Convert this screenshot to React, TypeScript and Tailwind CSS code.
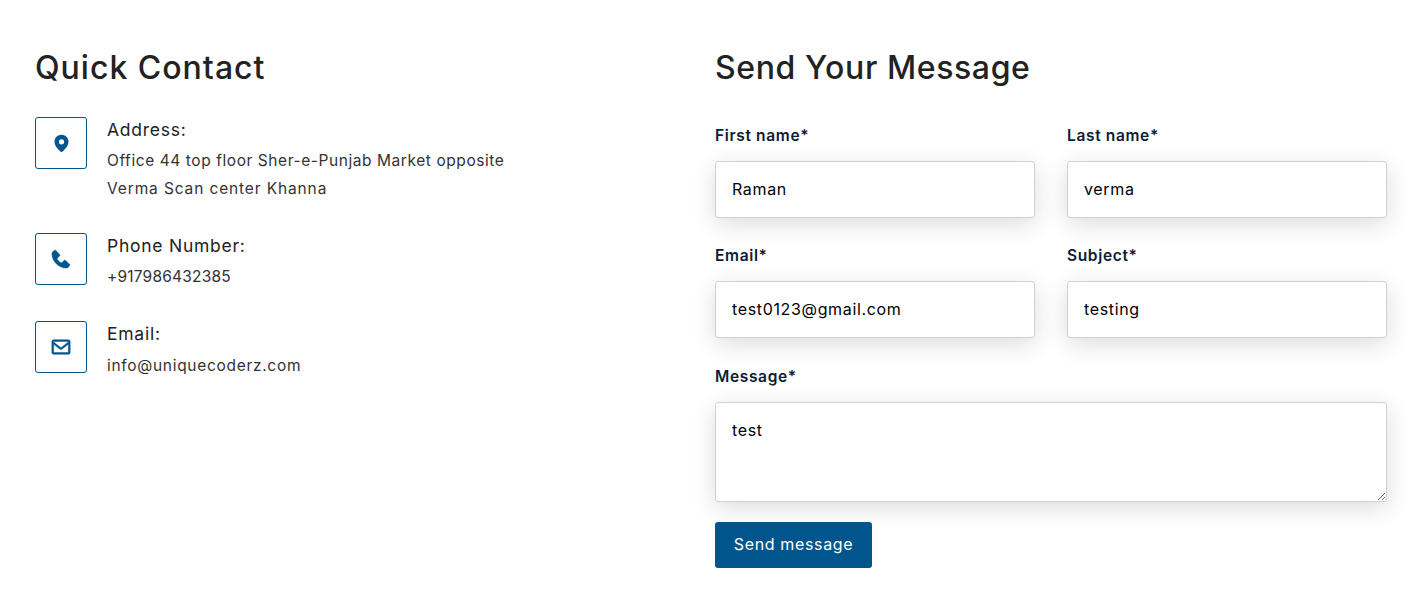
import React from "react";
import { BiSolidPhone, BiEnvelope } from "react-icons/bi";

function InfoIcon({ children }: { children: React.ReactNode }) {
  return (
    <div className="flex h-[52px] w-[52px] shrink-0 items-center justify-center rounded-[3px] border border-[#00568c] text-[#00568c]">
      {children}
    </div>
  );
}

function Field({ label, value }: { label: string; value: string }) {
  return (
    <div>
      <label className="block h-[26px] text-[15.5px] leading-[28px] font-semibold tracking-[0.65px] text-[#0b1c33]">{label}</label>
      <input
        readOnly
        value={value}
        className="mt-[13px] block h-[57px] w-full rounded-[3px] border border-[#d0d0d0] bg-white px-4 pb-[2px] text-[16px] tracking-[0.65px] text-black shadow-[0_6px_24px_rgba(0,0,0,0.14)] outline-none"
      />
    </div>
  );
}

export default function App() {
  return (
    <div className="h-[599px] overflow-hidden bg-white pt-[47px] pl-[35px] font-['Inter','Noto_Sans',sans-serif]">
      <div className="flex gap-8">
        {/* Quick contact */}
        <section className="w-[648px]">
          <h2 className="h-[42px] text-[32px] leading-[42px] font-medium tracking-[1px] text-[#222222]">Quick Contact</h2>
          <div className="mt-[28px] flex gap-5">
            <InfoIcon>
              <svg width="21" height="21" viewBox="0 0 24 24" fill="currentColor">
                <path d="M12 2C7.589 2 4 5.589 4 9.995 3.971 16.44 11.696 21.784 12 22c0 0 8.029-5.56 8-12 0-4.411-3.589-8-8-8zm0 11a3 3 0 1 1 0-6 3 3 0 0 1 0 6z" />
              </svg>
            </InfoIcon>
            <div>
              <h3 className="text-[17.5px] leading-[26px] tracking-[0.75px] text-[#222222]">Address:</h3>
              <p className="mt-[4px] text-[15.5px] leading-[28px] tracking-[0.57px] text-[#333333]">
                Office 44 top floor Sher-e-Punjab Market opposite<br />
                <span className="tracking-[0.87px]">Verma Scan center Khanna</span>
              </p>
            </div>
          </div>
          <div className="mt-[30px] flex gap-5">
            <InfoIcon><BiSolidPhone size={24} stroke="currentColor" strokeWidth={0.6} /></InfoIcon>
            <div>
              <h3 className="text-[17.5px] leading-[26px] tracking-[0.75px] text-[#222222]">Phone Number:</h3>
              <p className="mt-[4px] text-[15.5px] leading-[28px] tracking-[0.2px] text-[#333333]">+917986432385</p>
            </div>
          </div>
          <div className="mt-[30px] flex gap-5">
            <InfoIcon><BiEnvelope size={22} stroke="currentColor" strokeWidth={0.5} /></InfoIcon>
            <div>
              <h3 className="text-[17.5px] leading-[26px] tracking-[0.75px] text-[#222222]">Email:</h3>
              <p className="mt-[5px] text-[15.5px] leading-[28px] tracking-[0.7px] text-[#333333]">info@uniquecoderz.com</p>
            </div>
          </div>
        </section>

        {/* Message form */}
        <section className="w-[672px]">
          <h2 className="h-[42px] text-[32px] leading-[42px] font-medium tracking-[0.6px] text-[#222222]">Send Your Message</h2>
          <form className="mt-[33px]">
            <div className="grid grid-cols-2 gap-x-8 gap-y-[24px]">
              <Field label="First name*" value="Raman" />
              <Field label="Last name*" value="verma" />
              <Field label="Email*" value="test0123@gmail.com" />
              <Field label="Subject*" value="testing" />
            </div>
            <label className="mt-[25px] block h-[26px] text-[15.5px] leading-[28px] font-semibold tracking-[0.65px] text-[#0b1c33]">Message*</label>
            <textarea
              readOnly
              value="test"
              className="mt-[13px] block h-[100px] w-full rounded-[3px] border border-[#d0d0d0] bg-white px-4 py-[14px] text-[16px] leading-[26px] tracking-[0.65px] text-black shadow-[0_6px_24px_rgba(0,0,0,0.14)] outline-none"
            />
            <button
              type="button"
              className="mt-5 h-[46px] w-[157px] rounded-[3px] bg-[#00568c] pb-[2px] text-[16px] tracking-[0.65px] text-white"
            >
              Send message
            </button>
          </form>
        </section>
      </div>
    </div>
  );
}
